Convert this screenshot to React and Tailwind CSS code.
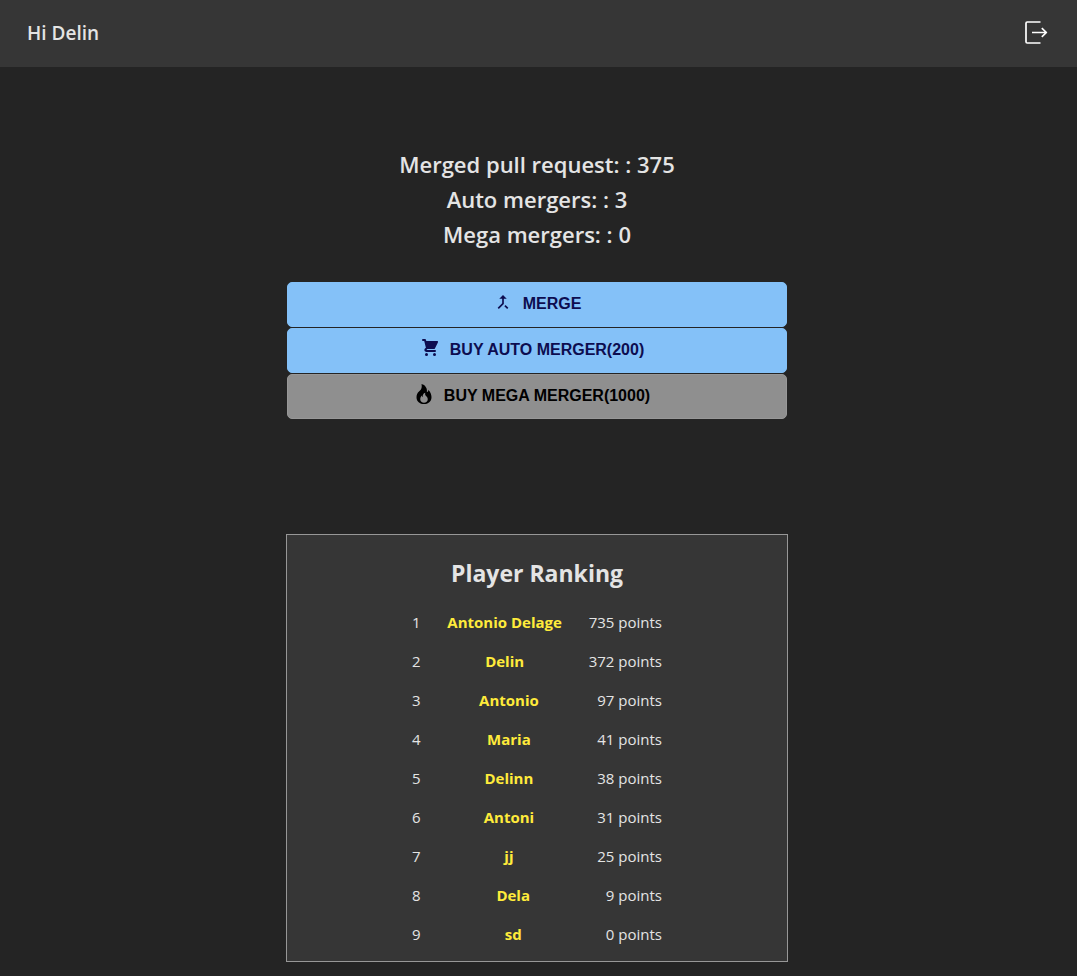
import { MdCallMerge } from 'react-icons/md';
import { HiShoppingCart } from 'react-icons/hi';
import { BsFire } from 'react-icons/bs';

const stats = [
  { label: 'Merged pull request:', value: 375 },
  { label: 'Auto mergers:', value: 3 },
  { label: 'Mega mergers:', value: 0 },
];

const players = [
  { name: 'Antonio Delage', points: 735 },
  { name: 'Delin', points: 372 },
  { name: 'Antonio', points: 97 },
  { name: 'Maria', points: 41 },
  { name: 'Delinn', points: 38 },
  { name: 'Antoni', points: 31 },
  { name: 'jj', points: 25 },
  { name: 'Dela', points: 9 },
  { name: 'sd', points: 0 },
];

function LogoutIcon() {
  return (
    <svg
      viewBox="0 0 24 24"
      className="size-6"
      fill="none"
      stroke="currentColor"
      strokeWidth="1.7"
      strokeLinejoin="round"
      aria-hidden="true"
    >
      <path d="M16.5 1H3.2A1.2 1.2 0 0 0 2 2.2v18.6A1.2 1.2 0 0 0 3.2 22h13.3" />
      <path d="M8 11.5h14.6M17.8 7.2l4.6 4.3-4.6 4.3" />
    </svg>
  );
}

function ActionButton({ icon: Icon, disabled, children }) {
  return (
    <button
      type="button"
      disabled={disabled}
      className="flex h-[45px] w-full items-center justify-center gap-2.5 rounded-[5px] border border-[#84c1f8] bg-[#84c1f8] pb-px font-['Liberation_Sans',Arial,sans-serif] text-base font-bold text-[#0d0d50] uppercase disabled:border-[#989898] disabled:bg-[#8f8f8f] disabled:text-black"
    >
      <Icon className="mb-1 size-5" aria-hidden="true" />
      {children}
    </button>
  );
}

export default function App() {
  return (
    <div className="min-h-screen bg-[#242424] pb-3.5 font-['Open_Sans','Noto_Sans',sans-serif] text-[#e4e4e4]">
      <header className="flex h-[67px] items-center justify-between bg-[#363636] px-[27px]">
        <h1 className="text-[19px] font-semibold">Hi Delin</h1>
        <button type="button" aria-label="Log out" className="mr-0.5 mb-0.5 text-white">
          <LogoutIcon />
        </button>
      </header>

      <main className="mx-auto flex w-full max-w-[505px] flex-col pt-20 pr-[3px]">
        <section className="text-center text-[22px] leading-[35px] font-semibold">
          {stats.map((stat) => (
            <p key={stat.label}>
              {stat.label} : {stat.value}
            </p>
          ))}
        </section>

        <div className="mt-[30px] flex flex-col gap-px px-px">
          <ActionButton icon={MdCallMerge}>
            <span>Merge</span>
          </ActionButton>
          <ActionButton icon={HiShoppingCart}>
            <span className="pr-2.5">Buy auto merger(200)</span>
          </ActionButton>
          <ActionButton icon={BsFire} disabled>
            <span className="pr-2.5">Buy mega merger(1000)</span>
          </ActionButton>
        </div>

        <section className="mt-[115px] border border-[#979797] bg-[#363636] pt-5 pb-[7px]">
          <h2 className="text-center text-[23px] leading-9 font-bold">Player Ranking</h2>
          <ol className="mx-auto mt-3 w-[250px] text-[15px]">
            {players.map((player, index) => (
              <li key={player.name} className="flex h-[39px] items-center justify-between">
                <span>{index + 1}</span>
                <span className="font-bold text-[#ffeb3b]">{player.name}</span>
                <span>{player.points} points</span>
              </li>
            ))}
          </ol>
        </section>
      </main>
    </div>
  );
}
